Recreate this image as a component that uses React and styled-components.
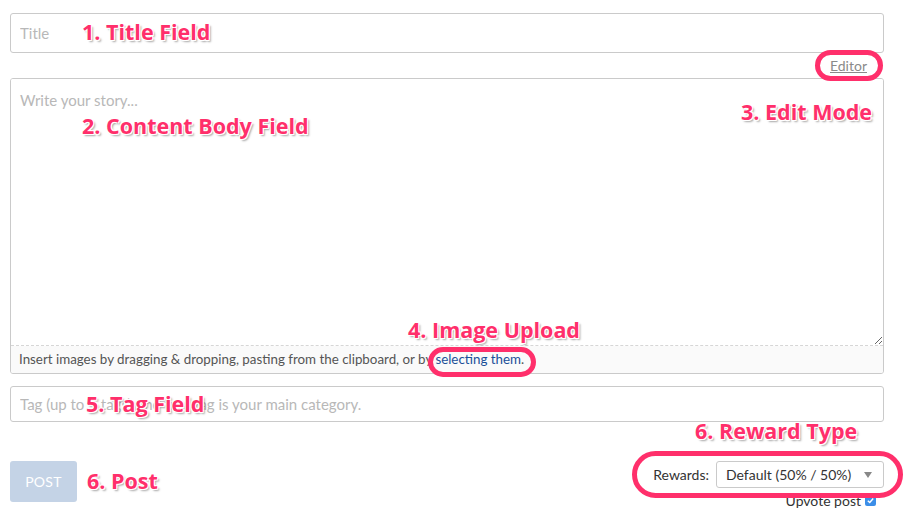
import React from "react";
import styled, { createGlobalStyle } from "styled-components";

const GlobalStyle = createGlobalStyle`
  html, body {
    margin: 0;
    padding: 0;
    background: #fff;
  }
  body {
    font-family: "Lato", "Liberation Sans", sans-serif;
    color: #333;
  }
`;

const Page = styled.div`
  position: relative;
  width: 904px;
  height: 524px;
  box-sizing: border-box;
  padding: 13px 20px 0 10px;
  overflow: hidden;
`;

const TextInput = styled.input`
  display: block;
  width: 100%;
  box-sizing: border-box;
  height: ${(p) => p.$height}px;
  padding: 0 9px;
  border: 1px solid #cacaca;
  border-radius: 3px;
  font-family: inherit;
  font-size: 15px;
  color: #333;
  outline: none;
  &::placeholder {
    color: #b8b8b8;
  }
`;

const EditorRow = styled.div`
  display: flex;
  justify-content: flex-end;
  height: 25px;
  align-items: center;
  padding-right: 17px;
`;

const EditorLink = styled.a`
  font-size: 14px;
  color: #8a8a8a;
  text-decoration: underline;
  cursor: pointer;
`;

const BodyBox = styled.div`
  border: 1px solid #cacaca;
  border-radius: 3px;
  overflow: hidden;
`;

const BodyArea = styled.textarea`
  display: block;
  width: 100%;
  box-sizing: border-box;
  height: 267px;
  border: none;
  border-bottom: 1px dashed #d6d6d6;
  padding: 12px 9px;
  font-family: inherit;
  font-size: 15px;
  resize: vertical;
  outline: none;
  &::placeholder {
    color: #b8b8b8;
  }
`;

const UploadHint = styled.div`
  background: #fafafa;
  height: 27px;
  line-height: 27px;
  padding: 0 8px;
  font-size: 13.35px;
  color: #555;
`;

const HintLink = styled.a`
  color: #1a5099;
  cursor: pointer;
`;

const TagWrap = styled.div`
  margin-top: 12px;
`;

const Footer = styled.div`
  display: flex;
  justify-content: space-between;
  align-items: flex-start;
  margin-top: 39px;
`;

const PostButton = styled.button`
  width: 67px;
  height: 41px;
  border: none;
  border-radius: 3px;
  background: #c4d3e6;
  color: #fff;
  font-family: inherit;
  font-size: 14px;
  letter-spacing: 0.3px;
`;

const RightCol = styled.div`
  display: flex;
  flex-direction: column;
  align-items: flex-end;
`;

const RewardsRow = styled.div`
  display: flex;
  align-items: center;
  gap: 7px;
`;

const Label = styled.span`
  font-size: 14px;
  color: #333;
`;

const Select = styled.div`
  width: 168px;
  height: 27px;
  box-sizing: border-box;
  border: 1px solid #cacaca;
  border-radius: 3px;
  padding: 0 9px;
  display: flex;
  align-items: center;
  justify-content: space-between;
  font-size: 14px;
  color: #333;
`;

const Caret = styled.span`
  width: 0;
  height: 0;
  border-left: 4px solid transparent;
  border-right: 4px solid transparent;
  border-top: 6px solid #888;
  margin-right: 2px;
`;

const UpvoteRow = styled.label`
  display: flex;
  align-items: center;
  gap: 4px;
  font-size: 14px;
  color: #333;
  margin-top: 4px;
  margin-right: 8px;
`;

const Check = styled.span`
  width: 11px;
  height: 11px;
  border-radius: 2px;
  background: #3b8ee8;
  display: flex;
  align-items: center;
  justify-content: center;
`;

const Note = styled.div`
  position: absolute;
  left: ${(p) => p.$x}px;
  top: ${(p) => p.$y}px;
  font-family: "Open Sans", "DejaVu Sans", sans-serif;
  font-weight: 700;
  font-size: 21.5px;
  line-height: 1;
  color: #ff2f6b;
  white-space: nowrap;
  text-shadow: -1px -1px 0 #fff, 1px -1px 0 #fff, -1px 1px 0 #fff, 1px 1px 0 #fff,
    2px 2px 2px rgba(0, 0, 0, 0.35);
  pointer-events: none;
`;

const Ring = styled.div`
  position: absolute;
  left: ${(p) => p.$x}px;
  top: ${(p) => p.$y}px;
  width: ${(p) => p.$w}px;
  height: ${(p) => p.$h}px;
  box-sizing: border-box;
  border: 5px solid #ff2f6b;
  border-radius: 999px;
  pointer-events: none;
`;

export default function App() {
  return (
    <>
      <GlobalStyle />
      <Page>
        <TextInput $height={40} placeholder="Title" />
        <EditorRow>
          <EditorLink>Editor</EditorLink>
        </EditorRow>
        <BodyBox>
          <BodyArea placeholder="Write your story..." />
          <UploadHint>
            Insert images by dragging &amp; dropping, pasting from the clipboard, or by{" "}
            <HintLink>selecting them</HintLink>.
          </UploadHint>
        </BodyBox>
        <TagWrap>
          <TextInput $height={36} placeholder="Tag (up to 5 tags), the first tag is your main category." />
        </TagWrap>
        <Footer>
          <PostButton>POST</PostButton>
          <RightCol>
            <RewardsRow>
              <Label>Rewards:</Label>
              <Select>
                Default (50% / 50%)
                <Caret />
              </Select>
            </RewardsRow>
            <UpvoteRow>
              Upvote post
              <Check>
                <svg width="9" height="9" viewBox="0 0 10 10">
                  <path d="M2 5.2 L4.2 7.3 L8 2.8" fill="none" stroke="#fff" strokeWidth="1.6" />
                </svg>
              </Check>
            </UpvoteRow>
          </RightCol>
        </Footer>

        <Ring $x={815} $y={50} $w={68} $h={31} />
        <Ring $x={428} $y={347} $w={108} $h={30} />
        <Ring $x={632} $y={451} $w={271} $h={47} />

        <Note $x={82} $y={21}>1. Title Field</Note>
        <Note $x={82} $y={115}>2. Content Body Field</Note>
        <Note $x={741} $y={101}>3. Edit Mode</Note>
        <Note $x={408} $y={319}>4. Image Upload</Note>
        <Note $x={86} $y={393}>5. Tag Field</Note>
        <Note $x={695} $y={420}>6. Reward Type</Note>
        <Note $x={87} $y={470}>6. Post</Note>
      </Page>
    </>
  );
}
